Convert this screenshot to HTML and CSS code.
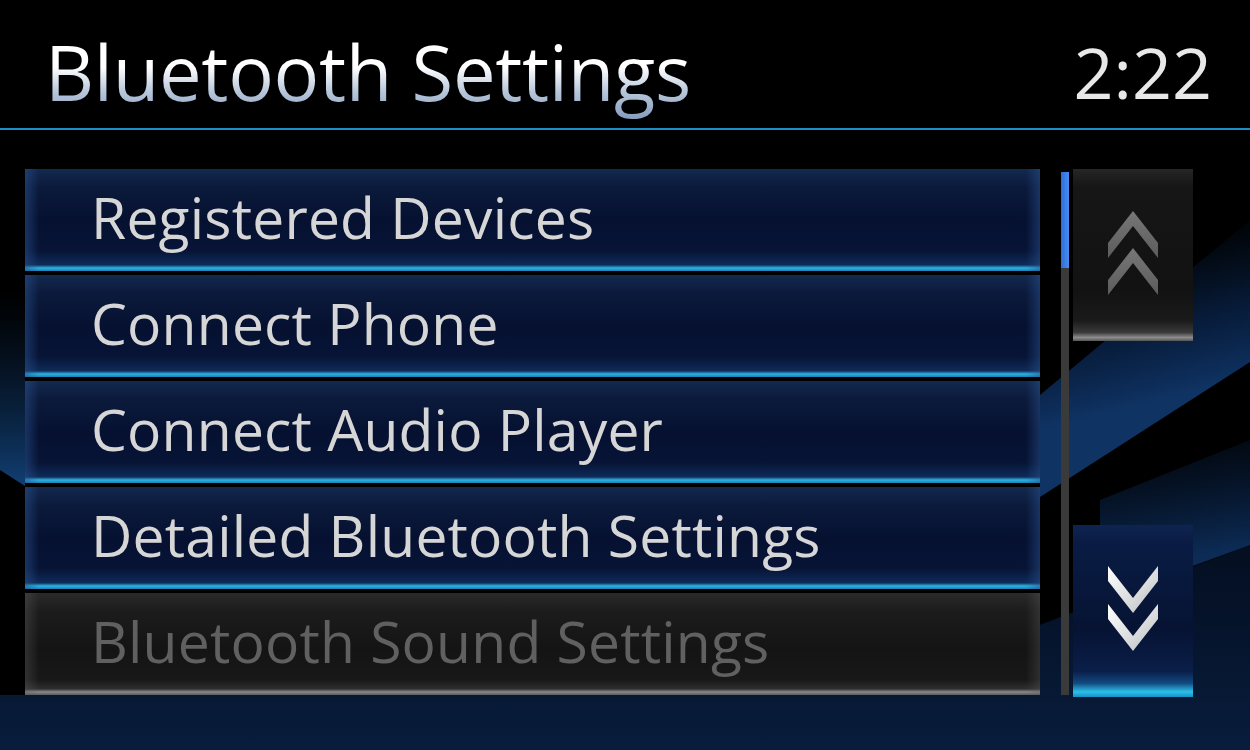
FILE: index.html
```html
<!DOCTYPE html>
<html>
<head>
<meta charset="utf-8">
<link rel="stylesheet" href="styles.css">
</head>
<body>
<div class="screen">
  <svg class="bg" width="1250" height="750" viewBox="0 0 1250 750">
    <defs>
      <linearGradient id="b1" gradientUnits="userSpaceOnUse" x1="1160" y1="230" x2="1200" y2="390">
        <stop offset="0" stop-color="#08203f" stop-opacity="0"/>
        <stop offset="0.6" stop-color="#0a2650" stop-opacity="0.75"/>
        <stop offset="1" stop-color="#0f3363"/>
      </linearGradient>
      <linearGradient id="b2" gradientUnits="userSpaceOnUse" x1="1150" y1="440" x2="1170" y2="560">
        <stop offset="0" stop-color="#081c3a" stop-opacity="0.2"/>
        <stop offset="1" stop-color="#0c2b55"/>
      </linearGradient>
      <linearGradient id="b3" gradientUnits="userSpaceOnUse" x1="0" y1="560" x2="0" y2="750">
        <stop offset="0" stop-color="#040f22"/>
        <stop offset="1" stop-color="#081d3c"/>
      </linearGradient>
      <linearGradient id="b4" gradientUnits="userSpaceOnUse" x1="0" y1="290" x2="0" y2="480">
        <stop offset="0" stop-color="#0a2242" stop-opacity="0"/>
        <stop offset="1" stop-color="#103c6e"/>
      </linearGradient>
    </defs>
    <polygon fill="url(#b1)" points="1040,395 1250,220 1250,362 1040,497"/>
    <polygon fill="url(#b3)" points="1000,640 1250,545 1250,750 0,750 0,695 1000,695"/>
    <polygon fill="url(#b2)" points="1100,500 1250,440 1250,545 1100,600"/>
    <polygon fill="url(#b4)" points="0,290 25,290 25,486 0,470"/>
  </svg>
  <header class="header">
    <h1 class="title">Bluetooth Settings</h1>
    <div class="clock">2:22</div>
  </header>
  <main class="content">
    <ul class="list">
      <li class="row">Registered Devices</li>
      <li class="row">Connect Phone</li>
      <li class="row">Connect Audio Player</li>
      <li class="row">Detailed Bluetooth Settings</li>
      <li class="row row-disabled">Bluetooth Sound Settings</li>
    </ul>
    <div class="scroll">
      <div class="track"><div class="thumb"></div></div>
      <div class="buttons">
        <div class="btn btn-up">
          <svg width="50" height="84" viewBox="0 0 50 84">
            <defs>
              <linearGradient id="gu" x1="0" y1="0" x2="0" y2="1">
                <stop offset="0" stop-color="#777"/>
                <stop offset="1" stop-color="#5c5c5c"/>
              </linearGradient>
            </defs>
            <polygon fill="url(#gu)" points="25,0 50,32 50,47 25,15 0,47 0,32"/>
            <polygon fill="url(#gu)" points="25,37 50,69 50,84 25,52 0,84 0,69"/>
          </svg>
        </div>
        <div class="btn btn-down">
          <svg width="50" height="85" viewBox="0 0 50 85">
            <defs>
              <linearGradient id="gd" x1="0" y1="0" x2="1" y2="1">
                <stop offset="0" stop-color="#ffffff"/>
                <stop offset="0.6" stop-color="#d8dadc"/>
                <stop offset="1" stop-color="#b8bcc0"/>
              </linearGradient>
            </defs>
            <polygon fill="url(#gd)" points="0,0 25,32 50,0 50,15 25,47 0,15"/>
            <polygon fill="url(#gd)" points="0,38 25,70 50,38 50,53 25,85 0,53"/>
          </svg>
        </div>
      </div>
    </div>
  </main>
</div>
</body>
</html>
```

FILE: styles.css
```css
* { box-sizing: border-box; }
html, body {
  margin: 0;
  padding: 0;
  background: #000;
}
.screen {
  position: relative;
  width: 1250px;
  height: 750px;
  overflow: hidden;
  background: #000;
  font-family: "Open Sans", "Noto Sans", sans-serif;
}
.bg {
  position: absolute;
  left: 0;
  top: 0;
  pointer-events: none;
}
.header {
  position: relative;
  height: 130px;
  display: flex;
  align-items: flex-start;
  justify-content: space-between;
  border-bottom: 2px solid #1b8fc4;
  background: #000;
}
.title {
  margin: 22px 0 0 45px;
  font-weight: 400;
  font-size: 76px;
  line-height: 100px;
  letter-spacing: -0.3px;
  background: linear-gradient(180deg, #ffffff 0%, #ffffff 45%, #b7c6da 70%, #7f98bb 100%);
  -webkit-background-clip: text;
  background-clip: text;
  color: transparent;
  -webkit-text-fill-color: transparent;
}
.clock {
  margin: 22px 38px 0 0;
  font-size: 70px;
  line-height: 100px;
  color: #e8e8e8;
}
.content {
  position: relative;
  display: flex;
  padding-top: 39px;
}
.list {
  list-style: none;
  margin: 0 0 0 25px;
  padding: 0;
  width: 1015px;
  display: flex;
  flex-direction: column;
  gap: 4px;
}
.row {
  height: 102px;
  padding-left: 66px;
  display: flex;
  align-items: center;
  font-size: 57px;
  letter-spacing: 0.2px;
  color: #d6d6d6;
  padding-bottom: 6px;
  background:
    linear-gradient(90deg, rgba(40,80,140,0.55) 0, rgba(40,80,140,0) 14px, rgba(40,80,140,0) calc(100% - 14px), rgba(40,80,140,0.5) 100%),
    linear-gradient(180deg, #13294f 0%, #0b1a3b 18%, #061131 50%, #071436 80%, #0e2b58 94%, #2ab4e4 97%, #1b7fb5 100%);
}
.row-disabled {
  color: #606060;
  background:
    linear-gradient(90deg, rgba(90,90,90,0.4) 0, rgba(90,90,90,0) 14px, rgba(90,90,90,0) calc(100% - 14px), rgba(90,90,90,0.35) 100%),
    linear-gradient(180deg, #2a2a2a 0%, #1c1c1c 18%, #141414 55%, #181818 85%, #2e2e2e 94%, #8a8a8a 97%, #5a5a5a 100%);
}
.scroll {
  display: flex;
  margin-left: 21px;
  gap: 4px;
}
.track {
  width: 8px;
  height: 523px;
  margin-top: 3px;
  background: #3a3a3a;
}
.thumb {
  height: 96px;
  background: linear-gradient(90deg, #2a6fd8, #4a8cef);
}
.buttons {
  width: 120px;
  display: flex;
  flex-direction: column;
  justify-content: space-between;
  height: 528px;
}
.btn {
  height: 172px;
  display: flex;
  align-items: center;
  justify-content: center;
}
.btn-up {
  padding-bottom: 4px;
  background: linear-gradient(180deg, #262626 0%, #161616 10%, #121212 70%, #1a1a1a 88%, #3a3a3a 95%, #8d8d8d 98%, #555 100%);
}
.btn-down {
  padding-bottom: 6px;
  background: linear-gradient(180deg, #0e2450 0%, #0a1c44 10%, #061333 60%, #0a1e48 85%, #124a80 92%, #2cc0ea 97%, #1790c4 100%);
}
```
